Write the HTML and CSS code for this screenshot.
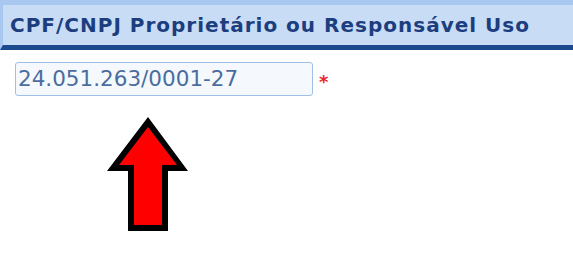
FILE: index.html
```html
<!DOCTYPE html>
<html>
<head>
<meta charset="utf-8">
<link rel="stylesheet" href="styles.css">
</head>
<body>
<div class="header"><span class="title">CPF/CNPJ Proprietário ou Responsável Uso</span></div>
<div class="field-row">
  <div class="input">24.051.263/0001-27</div>
  <span class="req">*</span>
</div>
<div class="arrow-wrap">
  <svg class="arrow" width="95" height="125" viewBox="100 110 95 125">
    <polygon points="148,117 188,171 168,171 168,231 128,231 128,171 107,171" fill="#000"/>
    <polygon points="148,127 177,165 162,165 162,225 134,225 134,165 119,165" fill="#ff0000"/>
  </svg>
</div>
</body>
</html>
```
FILE: styles.css
```css
html, body {
  margin: 0;
  padding: 0;
  background: #ffffff;
}
body {
  width: 573px;
  height: 256px;
  overflow: hidden;
  font-family: "DejaVu Sans", Verdana, sans-serif;
}
.header {
  box-sizing: border-box;
  height: 50px;
  background: #c8dcf5;
  border-top: 5px solid #a9c8ef;
  border-left: 3px solid #a9c8ef;
  border-bottom: 5px solid #1c4a8c;
  display: flex;
  align-items: center;
  padding-left: 7px;
}
.title {
  font-weight: bold;
  font-size: 20px;
  letter-spacing: 1px;
  color: #1d3e7e;
  white-space: nowrap;
}
.field-row {
  display: flex;
  align-items: center;
  margin-top: 12px;
  padding-left: 15px;
}
.input {
  box-sizing: border-box;
  width: 298px;
  height: 34px;
  border: 1px solid #9fbfe7;
  border-radius: 3px;
  background: #f5f9fe;
  color: #4b6d9d;
  font-size: 21.5px;
  padding-left: 2px;
  line-height: 32px;
}
.req {
  color: #e8262a;
  font-size: 18px;
  font-weight: bold;
  margin-left: 6px;
  margin-top: 4px;
}
.arrow-wrap {
  margin-top: 14px;
  padding-left: 100px;
  height: 125px;
}
.arrow {
  display: block;
}
```
